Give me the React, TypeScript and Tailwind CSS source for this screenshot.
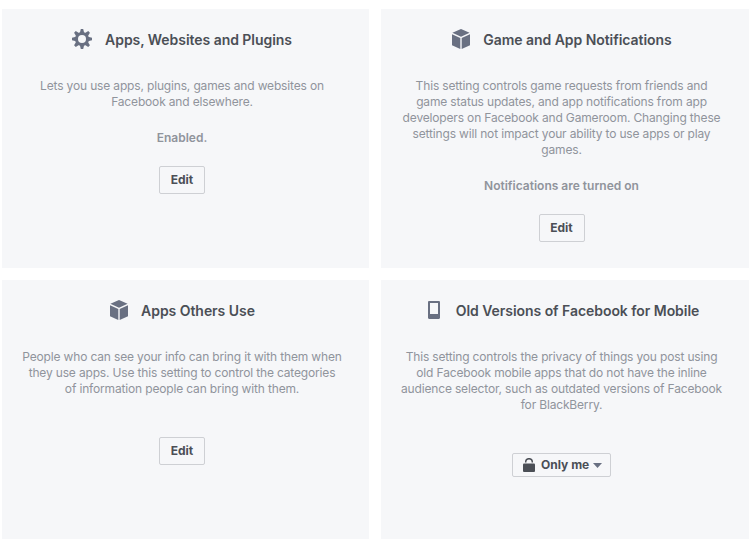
import type { ReactNode } from "react";

function GearIcon() {
  return (
    <svg width="20" height="20" viewBox="0 0 20 20" className="mr-px shrink-0 text-[#697082]">
      <g fill="currentColor">
        {[0, 45, 90, 135].map((deg) => (
          <path key={deg} d="M8.800 0h2.400l1 4v12l-1 4H8.800l-1-4V4z" transform={`rotate(${deg} 10 10)`} />
        ))}
        <circle cx="10" cy="10" r="7" />
      </g>
      <circle cx="10" cy="10" r="4" fill="#f6f7f9" />
    </svg>
  );
}

function CubeIcon() {
  return (
    <svg width="18" height="20" viewBox="0 0 18 20" fill="currentColor" className="shrink-0 text-[#697082]">
      <path d="M9 0l8.600 3.800L9 7.700.4 3.800z" />
      <path d="M0 5.200l8.300 3.700V20L0 16.300z" />
      <path d="M18 5.200L9.700 8.900V20l8.300-3.700z" />
    </svg>
  );
}

function PhoneIcon() {
  return (
    <svg width="12" height="18" viewBox="0 0 12 18" className="shrink-0 text-[#697082]">
      <path
        fill="currentColor"
        fillRule="evenodd"
        d="M1.200 0h9.600C11.500 0 12 .5 12 1.200v15.600c0 .7-.5 1.200-1.200 1.200H1.200C.5 18 0 17.500 0 16.800V1.200C0 .5.5 0 1.200 0zM2 2v11h8V2z"
      />
    </svg>
  );
}

function LockIcon() {
  return (
    <svg width="12" height="14" viewBox="0 0 12 14" className="shrink-0 text-[#4b4f56]">
      <path d="M2.700 4.600V4a3.300 3.300 0 0 1 6.600 0v.6" fill="none" stroke="currentColor" strokeWidth="1.500" />
      <rect y="5.500" width="12" height="8.500" rx="1" fill="currentColor" />
    </svg>
  );
}

function SettingCard({
  icon,
  title,
  lines,
  status,
  children,
}: {
  icon: ReactNode;
  title: string;
  lines: string[];
  status?: string;
  children: ReactNode;
}) {
  return (
    <section className="flex h-[259px] flex-col items-center bg-[#f6f7f9] pt-5 pr-[7px]">
      <div className="flex h-5 items-center gap-3">
        <span className="flex min-w-5 justify-center">{icon}</span>
        <h2 className="pt-0.5 text-sm leading-5 font-semibold tracking-[-0.05px] whitespace-nowrap text-[#4b4f56]">
          {title}
        </h2>
      </div>
      <p className="mt-[29px] text-center text-xs leading-4 tracking-[-0.16px] text-[#90949c]">
        {lines.map((line) => (
          <span key={line} className="block whitespace-nowrap">
            {line}
          </span>
        ))}
      </p>
      <p className="my-5 text-xs leading-4 font-semibold text-[#90949c]">{status}</p>
      {children}
    </section>
  );
}

function EditButton() {
  return (
    <button
      type="button"
      className="flex h-7 w-[46px] items-center justify-center rounded-[2px] border border-[#ced0d4] bg-[#f6f7f9] text-xs font-bold text-[#4b4f56]"
    >
      Edit
    </button>
  );
}

export default function App() {
  return (
    <main className="h-[549px] w-[754px] overflow-hidden bg-white pt-[9px] pl-0.5 font-['Inter',sans-serif]">
      <div className="grid grid-cols-[367px_368px] gap-3">
        <SettingCard
          icon={<GearIcon />}
          title="Apps, Websites and Plugins"
          lines={["Lets you use apps, plugins, games and websites on", "Facebook and elsewhere."]}
          status="Enabled."
        >
          <EditButton />
        </SettingCard>
        <SettingCard
          icon={<CubeIcon />}
          title="Game and App Notifications"
          lines={[
            "This setting controls game requests from friends and",
            "game status updates, and app notifications from app",
            "developers on Facebook and Gameroom. Changing these",
            "settings will not impact your ability to use apps or play",
            "games.",
          ]}
          status="Notifications are turned on"
        >
          <EditButton />
        </SettingCard>
        <SettingCard
          icon={<CubeIcon />}
          title="Apps Others Use"
          lines={[
            "People who can see your info can bring it with them when",
            "they use apps. Use this setting to control the categories",
            "of information people can bring with them.",
          ]}
        >
          <EditButton />
        </SettingCard>
        <SettingCard
          icon={<PhoneIcon />}
          title="Old Versions of Facebook for Mobile"
          lines={[
            "This setting controls the privacy of things you post using",
            "old Facebook mobile apps that do not have the inline",
            "audience selector, such as outdated versions of Facebook",
            "for BlackBerry.",
          ]}
        >
          <button
            type="button"
            className="flex h-6 w-[99px] items-center rounded-[2px] border border-[#ced0d4] bg-[#f6f7f9] pl-2.5 text-xs font-bold text-[#4b4f56]"
          >
            <LockIcon />
            <span className="ml-1.5 whitespace-nowrap">Only me</span>
            <svg width="9" height="5" viewBox="0 0 9 5" className="mt-px ml-1 shrink-0">
              <path d="M0 0h9L4.500 5z" fill="#697082" />
            </svg>
          </button>
        </SettingCard>
      </div>
    </main>
  );
}
